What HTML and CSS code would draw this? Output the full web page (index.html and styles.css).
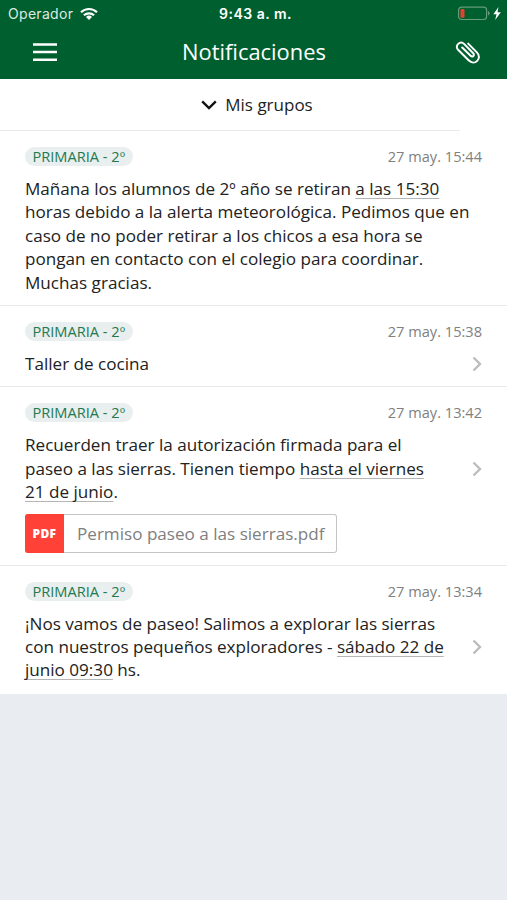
FILE: index.html
```html
<!DOCTYPE html>
<html lang="es">
<head>
    <meta charset="UTF-8">
    <meta name="viewport" content="width=device-width, initial-scale=1.0">
    <title>Notificaciones</title>
    <link rel="stylesheet" href="styles.css">
</head>
<body>

    <header class="header">
        <div class="status-bar">
            <div class="carrier">
                <span>Operador</span>
                <svg class="wifi" width="18" height="14" viewBox="0 0 18 14" fill="none" stroke="#fff" stroke-width="2.2">
                    <path d="M1 5.2a11.6 11.6 0 0 1 16 0"/>
                    <path d="M3.9 8.3a7.5 7.5 0 0 1 10.2 0"/>
                    <path d="M9 13 6 10a4.4 4.4 0 0 1 6 0z" fill="#fff" stroke="none"/>
                </svg>
            </div>
            <div class="clock">9:43 a. m.</div>
            <div class="battery">
                <svg width="44" height="16" viewBox="0 0 44 16">
                    <rect x="0.6" y="1.1" width="28" height="12.4" rx="3" fill="none" stroke="#669b7c" stroke-width="1.2"/>
                    <rect x="2.5" y="2.9" width="4" height="8.8" rx="1" fill="#e5412f"/>
                    <path d="M30 5.1c2.2.8 2.2 3.6 0 4.400z" fill="#669b7c"/>
                    <path d="M40.5 1.1 35.300 8.300h3.200L37.200 13.900l5.600-7.600h-3.300z" fill="#fff"/>
                </svg>
            </div>
        </div>
        <div class="nav-bar">
            <button class="icon-button" aria-label="Menú">
                <svg width="24" height="20" viewBox="0 0 24 20" stroke="#fff" stroke-width="2.6">
                    <path d="M0 2.5h24M0 10h24M0 17.8h24"/>
                </svg>
            </button>
            <h1>Notificaciones</h1>
            <button class="icon-button" aria-label="Adjuntos">
                <svg width="26" height="24" viewBox="0 0 26 24" fill="none" stroke="#fff" stroke-width="2" stroke-linecap="round" stroke-linejoin="round">
                    <path d="M7.2 7.5l8.4 8.3c2 1.9 4.5-.6 2.6-2.5L9.3 4.1C5.2 0-.8 5.7 3.1 9.8l10.500 10.500c6 6 14.200-1.900 8.300-7.900L13.200 3.600"/>
                </svg>
            </button>
        </div>
    </header>

    <div class="groups">
        <svg width="16" height="10" viewBox="0 0 16 10" fill="none" stroke="#111" stroke-width="2.4">
            <path d="M1.2 1.3 8 8l6.8-6.7"/>
        </svg>
        <span>Mis grupos</span>
    </div>

    <main class="notifications">
        <article class="notification">
            <div class="meta">
                <span class="tag">PRIMARIA - 2º</span>
                <time>27 may. 15:44</time>
            </div>
            <div class="content">
                <p>Mañana los alumnos de 2º año se retiran <u>a las 15:30</u><br>horas debido a la alerta meteorológica. Pedimos que en<br>caso de no poder retirar a los chicos a esa hora se<br>pongan en contacto con el colegio para coordinar.<br>Muchas gracias.</p>
            </div>
        </article>

        <article class="notification">
            <div class="meta">
                <span class="tag">PRIMARIA - 2º</span>
                <time>27 may. 15:38</time>
            </div>
            <div class="content">
                <p>Taller de cocina</p>
                <svg class="chevron" width="10" height="16" viewBox="0 0 10 16"><path d="M1.5 1.5 8 8l-6.5 6.5"/></svg>
            </div>
        </article>

        <article class="notification">
            <div class="meta">
                <span class="tag">PRIMARIA - 2º</span>
                <time>27 may. 13:42</time>
            </div>
            <div class="content">
                <p>Recuerden traer la autorización firmada para el<br>paseo a las sierras. Tienen tiempo <u>hasta el viernes</u><br><u>21 de junio</u>.</p>
                <svg class="chevron" width="10" height="16" viewBox="0 0 10 16"><path d="M1.5 1.5 8 8l-6.5 6.5"/></svg>
            </div>
            <div class="attachment">
                <span class="file-type">PDF</span>
                <span class="file-name">Permiso paseo a las sierras.pdf</span>
            </div>
        </article>

        <article class="notification">
            <div class="meta">
                <span class="tag">PRIMARIA - 2º</span>
                <time>27 may. 13:34</time>
            </div>
            <div class="content">
                <p>¡Nos vamos de paseo! Salimos a explorar las sierras<br>con nuestros pequeños exploradores - <u>sábado 22 de</u><br><u>junio 09:30</u> hs.</p>
                <svg class="chevron" width="10" height="16" viewBox="0 0 10 16"><path d="M1.5 1.5 8 8l-6.5 6.5"/></svg>
            </div>
        </article>
    </main>

</body>
</html>
```
FILE: styles.css
```css
* {
    box-sizing: border-box;
}

body {
    margin: 0;
    min-height: 100vh;
    font-family: 'Open Sans', 'Noto Sans', sans-serif;
    background-color: #e9ecf1;
    color: #222;
}

.header {
    height: 79px;
    background-color: #005f2f; /* School green */
    color: #fff;
}

.status-bar {
    display: grid;
    grid-template-columns: 1fr auto 1fr;
    align-items: center;
    height: 27px;
    padding: 0 5px 0 8px;
    font-family: Inter, Roboto, sans-serif;
    font-size: 14px;
}

.carrier {
    display: flex;
    align-items: center;
    gap: 7px;
    color: #dcebe2;
    letter-spacing: 0.3px;
}

.clock {
    padding-left: 1px;
    font-weight: 600;
    letter-spacing: 0.5px;
}

.battery {
    display: flex;
    justify-content: flex-end;
}

.nav-bar {
    display: flex;
    align-items: center;
    justify-content: space-between;
    height: 50px;
    padding: 0 26px 0 33px;
}

.icon-button {
    display: flex;
    padding: 0;
    border: none;
    background: none;
}

h1 {
    margin: 0 0 2px -4px;
    font-size: 21.9px;
    font-weight: 400;
}

.groups {
    display: flex;
    align-items: center;
    justify-content: center;
    gap: 8px;
    height: 51px;
    padding-left: 7px;
    font-size: 17px;
    background-color: #fff;
}

.notifications {
    background-color: #fff;
}

/* The first divider stops short of the right edge */
.notifications::before {
    content: '';
    display: block;
    width: 460px;
    height: 1px;
    background-color: #e8e9ea;
}

.notification {
    padding: 16px 25px 11px;
    border-bottom: 1px solid #e8e9ea;
}

.notification:last-child {
    padding-bottom: 12px;
    border-bottom: none;
}

.meta {
    display: flex;
    align-items: center;
    justify-content: space-between;
    height: 19px;
    margin-bottom: 11px;
}

.tag {
    height: 19px;
    padding: 0 7.5px;
    border-radius: 10px;
    background-color: #e9eeef;
    color: #1f7a50;
    font-size: 14.6px;
    line-height: 19px;
}

time {
    color: #808080;
    font-size: 14.6px;
    line-height: 19px;
}

.content {
    display: flex;
    align-items: center;
    justify-content: space-between;
}

p {
    margin: 0;
    font-size: 17.1px;
    line-height: 23.4px;
    white-space: nowrap;
}

u {
    text-decoration: underline;
    text-decoration-color: #b5b5b5;
    text-decoration-thickness: 1px;
    text-decoration-skip-ink: none;
    text-underline-offset: 3px;
}

.chevron {
    fill: none;
    stroke: #bdbdbd;
    stroke-width: 2.4;
}

.attachment {
    display: flex;
    width: 312px;
    height: 39px;
    margin: 10px 0 12px;
    border: 1px solid #c4c4c4;
    border-left: none;
    border-radius: 3px;
}

.notification:has(.attachment) {
    padding-bottom: 0;
}

.file-type {
    width: 39px;
    margin: -1px 0;
    border-radius: 3px 0 0 3px;
    background-color: #ff4137;
    color: #fff;
    font-size: 12px;
    font-weight: 800;
    line-height: 39px;
    text-align: center;
    letter-spacing: 0.3px;
}

.file-name {
    padding-left: 13px;
    color: #808080;
    font-size: 17.1px;
    line-height: 38px;
    white-space: nowrap;
}
```
